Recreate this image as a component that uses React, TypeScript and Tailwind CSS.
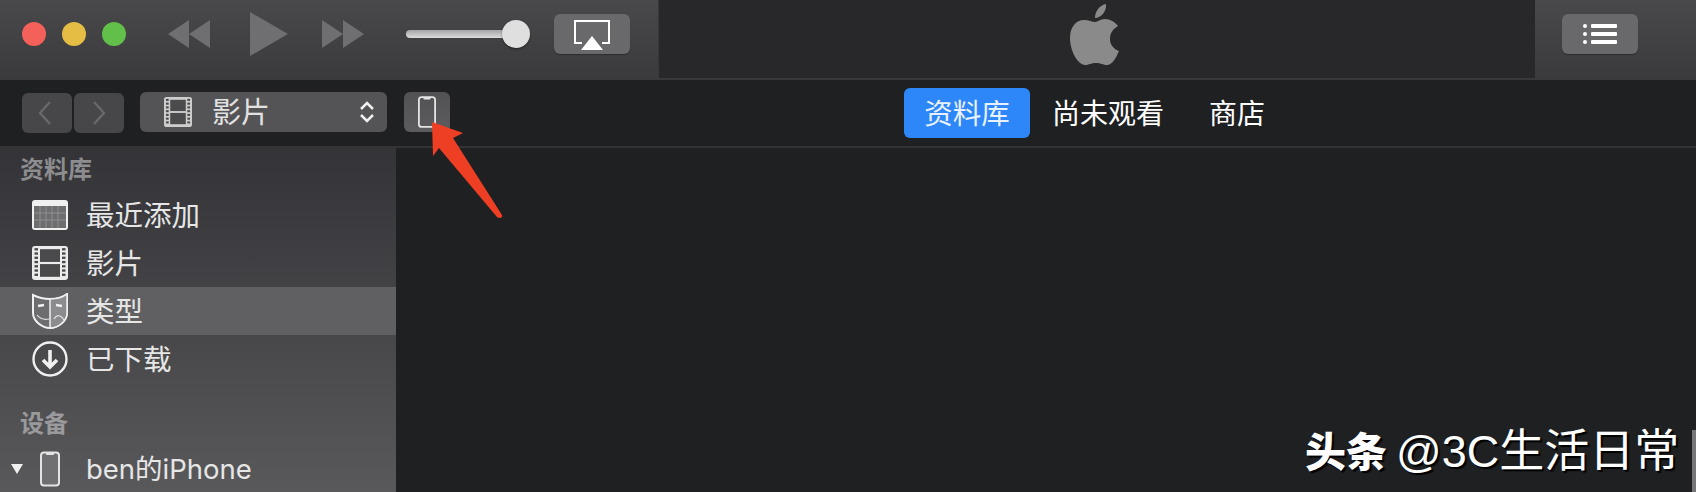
const cjk = "font-['Inter','Noto_Sans_CJK_SC',sans-serif]";

function Film({ className }: { className?: string }) {
  const holes = [0, 1, 2, 3, 4, 5, 6];
  return (
    <svg viewBox="0 0 36 32" preserveAspectRatio="none" className={className}>
      <rect x="0" y="0" width="36" height="32" rx="3" fill="#ececec" />
      <rect x="8" y="3" width="20" height="12" fill="#4a4a4c" />
      <rect x="8" y="17" width="20" height="12" fill="#4a4a4c" />
      {holes.map((i) => (
        <g key={i} fill="#4a4a4c">
          <rect x="2.5" y={2 + i * 4} width="3.5" height="2.2" />
          <rect x="30" y={2 + i * 4} width="3.5" height="2.2" />
        </g>
      ))}
    </svg>
  );
}

function Phone({ className, fill = "none" }: { className?: string; fill?: string }) {
  return (
    <svg viewBox="0 0 20 35" className={className}>
      <rect x="1" y="1" width="18" height="33" rx="3" fill={fill} stroke="#e4e4e4" strokeWidth="2" />
      <rect x="6" y="1" width="8" height="2.5" rx="1" fill="#e4e4e4" />
    </svg>
  );
}

function Transport({ flip }: { flip?: boolean }) {
  return (
    <svg viewBox="0 0 42 28" className={`h-7 w-[42px] ${flip ? "-scale-x-100" : ""}`}>
      <path d="M0 14 L21 0 V28 Z M21 14 L42 0 V28 Z" fill="#6f6f71" />
    </svg>
  );
}

function Item({ icon, label, selected }: { icon: React.ReactNode; label: string; selected?: boolean }) {
  return (
    <div className={`flex h-12 items-center ${selected ? "bg-[#606062]" : ""}`}>
      <div className="ml-8 flex h-9 w-9 items-center justify-center">{icon}</div>
      <span className="ml-[18px] pt-0.5 text-[28.5px] leading-none text-[#e6e6e6]">{label}</span>
    </div>
  );
}

export default function App() {
  return (
    <div className={`relative flex h-[492px] w-[1696px] flex-col overflow-hidden bg-[#1f2022] ${cjk}`}>
      {/* title bar */}
      <div className="flex h-20 shrink-0 bg-gradient-to-b from-[#49494b] to-[#3a3a3c]">
        <div className="flex w-[658px] shrink-0 items-center pb-3">
          <div className="ml-[22px] flex gap-4">
            <div className="h-6 w-6 rounded-full bg-[#f4605a]" />
            <div className="h-6 w-6 rounded-full bg-[#e5bd45]" />
            <div className="h-6 w-6 rounded-full bg-[#62bf4a]" />
          </div>
          <div className="ml-[42px]"><Transport /></div>
          <svg viewBox="0 0 38 44" className="ml-10 h-11 w-[38px]"><path d="M0 0 L38 22 L0 44 Z" fill="#6f6f71" /></svg>
          <div className="ml-[34px]"><Transport flip /></div>
          <div className="relative ml-[42px] h-7 w-[124px]">
            <div className="absolute left-0 right-4 top-[10px] h-2 rounded-full bg-gradient-to-b from-[#a5a5a5] to-[#dcdcdc]" />
            <div className="absolute right-0 top-0 h-7 w-7 rounded-full bg-[#dfdfdf] shadow-[0_1px_2px_rgba(0,0,0,0.5)]" />
          </div>
          <div className="ml-6 flex h-10 w-[76px] items-center justify-center rounded-md bg-[#69696b] shadow-[0_1px_1px_rgba(0,0,0,0.3)]">
            <svg viewBox="0 0 36 30" className="mt-0.5 h-[30px] w-9">
              <path d="M8 23 H1 V1 H35 V23 H28" fill="none" stroke="#fff" strokeWidth="2" />
              <path d="M18 16 L29 30 H7 Z" fill="#fff" />
            </svg>
          </div>
        </div>
        <div className="flex flex-1 items-start justify-center border-b-2 border-l border-[#39393b] bg-[#28282a]">
          <svg viewBox="0 0 51 61" className="mr-[6px] mt-1 h-[61px] w-[51px]">
            <path
              d="M26 14 C26 7 31 1 37 0 C38 7 32 14 26 14 Z M36 15 C41 15 46 18 49 22 C44 25 41 29 41 35 C41 41 45 45 50 47 C47 54 43 61 38 61 C34 61 32 59 27 59 C22 59 20 61 16 61 C9 61 1 47 1 34 C1 23 7 16 15 16 C20 16 23 18 26 18 C29 18 31 15 36 15 Z"
              fill="#8a8a8a"
            />
          </svg>
        </div>
        <div className="flex w-[161px] shrink-0 items-center pb-3">
          <div className="ml-[27px] flex h-10 w-[76px] items-center justify-center rounded-md bg-[#69696b] shadow-[0_1px_1px_rgba(0,0,0,0.3)]">
            <svg viewBox="0 0 36 24" className="h-6 w-9 fill-white">
              <circle cx="3" cy="4" r="2" /><circle cx="3" cy="12" r="2" /><circle cx="3" cy="20" r="2" />
              <rect x="9" y="2" width="26" height="4" rx="1" /><rect x="9" y="10" width="26" height="4" rx="1" /><rect x="9" y="18" width="26" height="4" rx="1" />
            </svg>
          </div>
        </div>
      </div>

      {/* toolbar */}
      <div className="flex h-[68px] shrink-0 border-b-2 border-[#333335] bg-[#1f2022]">
        <div className="flex w-[904px] shrink-0 items-start">
          <div className="ml-[22px] mt-[13px] flex gap-0.5">
            <div className="flex h-10 w-[50px] items-center justify-center rounded-md bg-[#474749]">
              <svg viewBox="0 0 14 24" className="mr-1 h-6 w-3.5"><path d="M12 1 L2 12 L12 23" fill="none" stroke="#6a6a6c" strokeWidth="2.2" /></svg>
            </div>
            <div className="flex h-10 w-[50px] items-center justify-center rounded-md bg-[#474749]">
              <svg viewBox="0 0 14 24" className="h-6 w-3.5"><path d="M2 1 L12 12 L2 23" fill="none" stroke="#6a6a6c" strokeWidth="2.2" /></svg>
            </div>
          </div>
          <div className="ml-4 mt-3 flex h-10 w-[247px] items-center rounded-md bg-[#545456]">
            <Film className="ml-6 h-[30px] w-7 opacity-80" />
            <span className="ml-5 text-[29px] leading-none text-[#e2e2e2]">影片</span>
            <svg viewBox="0 0 16 24" className="ml-auto mr-3 h-6 w-4"><path d="M2 9 L8 3 L14 9 M2 15 L8 21 L14 15" fill="none" stroke="#eeeeee" strokeWidth="2.6" /></svg>
          </div>
          <div className="ml-[17px] mt-3 flex h-10 w-[46px] items-center justify-center rounded-md bg-gradient-to-b from-[#525254] to-[#5c5c5e]">
            <Phone className="h-8 w-[18px]" />
          </div>
        </div>
        <div className="mt-2 flex h-[50px] items-center">
          <div className="flex h-[50px] w-[126px] items-center justify-center rounded-md bg-[#2d87f8] pt-0.5 text-[28.5px] leading-none text-[#e8f1ff]">资料库</div>
          <div className="ml-[22px] pt-0.5 text-[28px] leading-none text-white">尚未观看</div>
          <div className="ml-[45px] pt-0.5 text-[28px] leading-none text-white">商店</div>
        </div>
      </div>

      {/* body */}
      <div className="flex min-h-0 flex-1">
        <div className="w-[396px] shrink-0 bg-gradient-to-b from-[#343438] to-[#59595b]">
          <div className="flex h-[43px] items-center pl-5 text-[24px] font-bold leading-none text-[#8d8d8f]">资料库</div>
          <Item
            label="最近添加"
            icon={
              <svg viewBox="0 0 36 30" className="h-[30px] w-9">
                <rect width="36" height="30" rx="3" fill="#f0f0f0" />
                <rect x="2" y="6" width="32" height="22" fill="#6d6d6f" />
                <path d="M8 6 V28 M14 6 V28 M20 6 V28 M26 6 V28 M2 13 H34 M2 20 H34" stroke="#8f8f91" strokeWidth="1" />
              </svg>
            }
          />
          <Item label="影片" icon={<Film className="h-[34px] w-9" />} />
          <Item
            selected
            label="类型"
            icon={
              <svg viewBox="0 0 36 36" className="h-9 w-9">
                <path d="M1 2 C7 5 12 6 18 6 C24 6 30 5 35 1 V20 C35 28 26 35 18 35 C10 35 1 28 1 20 Z" fill="#6d6d6f" stroke="#f0f0f0" strokeWidth="2" />
                <path d="M18 6 V35 C26 35 35 28 35 20 V1 C30 5 24 6 18 6 Z" fill="#8c8c8e" stroke="#f0f0f0" strokeWidth="1.5" />
                <path d="M6 13 L12 12 M24 12 L30 13" stroke="#f0f0f0" strokeWidth="2.5" />
                <path d="M5 22 C8 26 12 27 17 26 M22 26 C25 21 29 22 32 27" fill="none" stroke="#e0e0e0" strokeWidth="1.2" />
              </svg>
            }
          />
          <Item
            label="已下载"
            icon={
              <svg viewBox="0 0 36 36" className="h-9 w-9">
                <circle cx="18" cy="18" r="16.5" fill="none" stroke="#f0f0f0" strokeWidth="2.4" />
                <path d="M18 9 V25 M11 19 L18 26 L25 19" fill="none" stroke="#f0f0f0" strokeWidth="3.6" />
              </svg>
            }
          />
          <div className="mt-[19px] flex h-[43px] items-center pl-5 text-[24px] font-bold leading-none text-[#9a9a9c]">设备</div>
          <div className="flex h-12 items-center">
            <svg viewBox="0 0 12 10" className="ml-[11px] h-2.5 w-3 fill-[#f0f0f0]"><path d="M0 0 H12 L6 10 Z" /></svg>
            <Phone className="ml-[17px] h-9 w-5" fill="#6f6f71" />
            <span className="ml-[26px] pt-0.5 text-[27.5px] leading-none text-[#e6e6e6]">ben的iPhone</span>
          </div>
        </div>
        <div className="flex-1 bg-[#1f2022]" />
      </div>

      {/* red annotation arrow */}
      <svg viewBox="0 0 80 100" className="absolute left-[428px] top-[120px] h-[100px] w-20">
        <path d="M4 2 L35 13 L25 18 L74 95 Q75 98 71 98 L69 97 L11 28 L5 36 Z" fill="#ee3f24" />
      </svg>

      {/* watermark */}
      <div className="absolute left-[1305px] top-[427px] flex items-center whitespace-nowrap text-[41px] leading-[50px] text-white [text-shadow:2px_2px_1px_#000]">
        <span className="font-black">头条</span>
        <span className="ml-[9px] font-['Liberation_Sans','Noto_Sans_CJK_SC',sans-serif] text-[45px]">@3C生活日常</span>
      </div>
      <div className="absolute bottom-0 right-0 h-[62px] w-1 bg-[#77777a]" />
    </div>
  );
}
